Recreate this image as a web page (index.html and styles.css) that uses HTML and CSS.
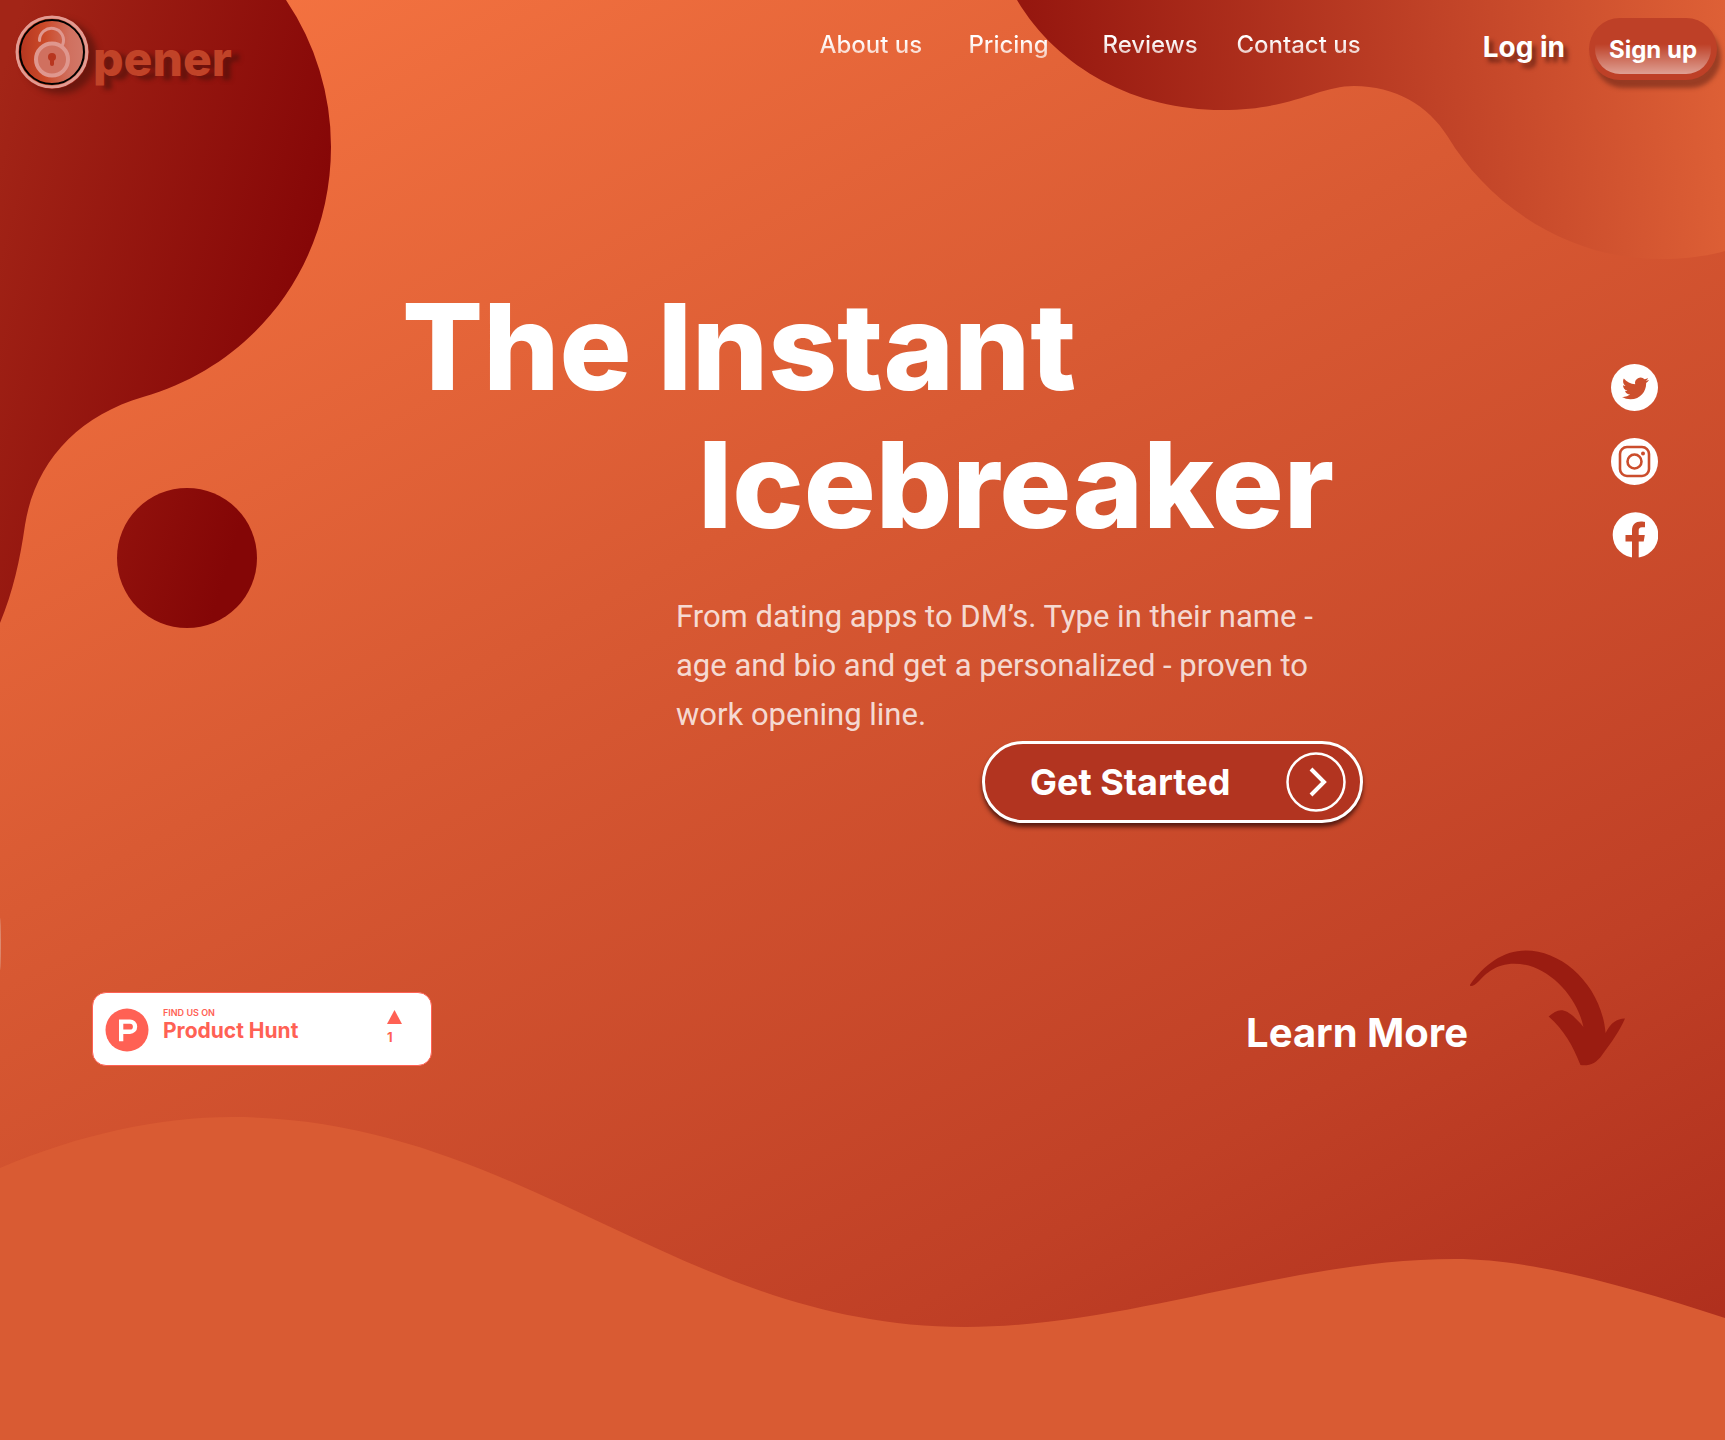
FILE: index.html
```html
<!DOCTYPE html>
<html lang="en">
<head>
<meta charset="utf-8">
<meta name="viewport" content="width=device-width, initial-scale=1">
<title>Opener</title>
<link rel="stylesheet" href="styles.css">
</head>
<body>
<div class="page">
  <svg class="shape shape-left" viewBox="0 0 332 980" width="332" height="980" aria-hidden="true">
    <defs>
      <linearGradient id="left-fill" gradientUnits="userSpaceOnUse" x1="0" y1="80" x2="330" y2="170">
        <stop offset="0" stop-color="#a32517"/><stop offset="1" stop-color="#860707"/>
      </linearGradient>
      <linearGradient id="dot-fill" x1="0" y1="0.3" x2="1" y2="0.6">
        <stop offset="0" stop-color="#91110c"/><stop offset="0.8" stop-color="#840606"/>
      </linearGradient>
    </defs>
    <path fill="url(#left-fill)" d="M0 0H286A262 262 0 0 1 331 147C331 262 258 364 143 397C78 416 35 462 25 525C20 560 13 592 0 623Z"/>
    <circle fill="url(#dot-fill)" cx="187" cy="558" r="70"/>
    <ellipse fill="#dc8a70" cx="0" cy="944" rx="1" ry="26"/>
  </svg>
  <svg class="shape shape-right" viewBox="1017 0 708 260" width="708" height="260" aria-hidden="true">
    <defs>
      <linearGradient id="right-fill" gradientUnits="userSpaceOnUse" x1="1030" y1="60" x2="1725" y2="10">
        <stop offset="0" stop-color="#96170f"/><stop offset="0.58" stop-color="#c04227"/><stop offset="1" stop-color="#de6036"/>
      </linearGradient>
    </defs>
    <path fill="url(#right-fill)" d="M1017 0C1058 69 1136 110 1222 110C1293 110 1318 86 1354 86C1395 86 1428 105 1448 137C1486 200 1562 259 1661 259C1685 259 1708 256 1725 251V0Z"/>
  </svg>
  <svg class="shape shape-wave" viewBox="0 0 1725 324" preserveAspectRatio="none" aria-hidden="true">
    <path fill="#d95b33" d="M0 52C80 18 160 1 232 1C520 1 680 211 965 211C1130 211 1290 143 1455 143C1530 143 1620 168 1725 202V324H0Z"/>
  </svg>

  <header class="header">
    <a class="logo" href="#" aria-label="Opener">
      <svg class="logo-mark" viewBox="0 0 74 74" width="74" height="74" aria-hidden="true">
        <defs>
          <linearGradient id="logo-fill">
            <stop offset="0" stop-color="#b3341f"/><stop offset="0.4" stop-color="#cb4a29"/><stop offset="0.75" stop-color="#d0705f"/><stop offset="1" stop-color="#d27a6b"/>
          </linearGradient>
        </defs>
        <circle cx="37" cy="37" r="35" fill="url(#logo-fill)" stroke="#e39a91" stroke-width="3"/>
        <circle cx="37" cy="37" r="32" fill="none" stroke="#000" stroke-width="2"/>
        <path d="M24.500 25.500A12 12 0 1 1 47.500 30" fill="none" stroke="#df978e" stroke-width="3" stroke-linecap="round"/>
        <circle cx="37" cy="44.500" r="16" fill="#d0705f" stroke="#df978e" stroke-width="4"/>
        <circle cx="37" cy="42" r="4" fill="#b8361f"/>
        <path d="M37 43V49" stroke="#b8361f" stroke-width="4" stroke-linecap="round"/>
      </svg>
      <span class="logo-text">pener</span>
    </a>
    <nav class="nav" aria-label="Main">
      <a href="#">About us</a>
      <a href="#">Pricing</a>
      <a href="#">Reviews</a>
      <a href="#">Contact us</a>
    </nav>
    <a class="login" href="#">Log in</a>
    <button class="signup" type="button"><span>Sign up</span></button>
  </header>

  <main>
    <section class="hero">
      <div class="hero-content">
        <h1 class="title"><span>The Instant</span> <span class="title-second">Icebreaker</span></h1>
        <p class="lead">From dating apps to DM’s. Type in their name -<br>age and bio and get a personalized - proven to<br>work opening line.</p>
        <button class="start" type="button">
          Get Started
          <svg viewBox="0 0 60 60" width="60" height="60" fill="none" stroke="#fff" aria-hidden="true">
            <circle cx="30" cy="30" r="28.500" stroke-width="2.500"/>
            <path d="M25 17L38 30L25 43" stroke-width="4"/>
          </svg>
        </button>
      </div>
      <div class="social">
        <a href="#" aria-label="Twitter">
          <svg viewBox="0 0 47 47" width="47" height="47" aria-hidden="true">
            <circle cx="23.500" cy="23.500" r="23.500" fill="#fff"/>
            <path transform="translate(11 11) scale(1.120)" fill="#cd4f2d" d="M23.953 4.570a10 10 0 01-2.825.775 4.958 4.958 0 002.163-2.723c-.951.555-2.005.959-3.127 1.184a4.920 4.920 0 00-8.384 4.482C7.690 8.095 4.067 6.130 1.640 3.162a4.822 4.822 0 00-.666 2.475c0 1.710.870 3.213 2.188 4.096a4.904 4.904 0 01-2.228-.616v.060a4.923 4.923 0 003.946 4.827 4.996 4.996 0 01-2.212.085 4.936 4.936 0 004.604 3.417 9.867 9.867 0 01-6.102 2.105c-.390 0-.779-.023-1.170-.067a13.995 13.995 0 007.557 2.209c9.053 0 13.998-7.496 13.998-13.985 0-.210 0-.420-.015-.630A9.935 9.935 0 0024 4.590z"/>
          </svg>
        </a>
        <a href="#" aria-label="Instagram">
          <svg viewBox="0 0 47 47" width="47" height="47" aria-hidden="true">
            <circle cx="23.500" cy="23.500" r="23.500" fill="#fff"/>
            <rect x="9" y="9" width="29" height="29" rx="7" fill="none" stroke="#cb4d2c" stroke-width="2.600"/>
            <circle cx="23.500" cy="23.500" r="7" fill="none" stroke="#cb4d2c" stroke-width="2.600"/>
            <circle cx="32" cy="15.500" r="2" fill="#cb4d2c"/>
          </svg>
        </a>
        <a href="#" aria-label="Facebook">
          <svg viewBox="0 0 47 47" width="47" height="47" aria-hidden="true">
            <circle cx="24.500" cy="23" r="22.800" fill="#fff"/>
            <path fill="#ca4b2b" d="M21 47V29.500H14.500V23H21V18.500C21 12.500 24.500 9.500 30 9.500C32 9.500 33 9.700 34 10V15.300H31C28.500 15.300 27.700 16.500 27.700 18.700V23H33.800L32.700 29.500H27.700V47Z"/>
          </svg>
        </a>
      </div>
    </section>

    <section class="links">
      <a class="hunt" href="#">
        <svg viewBox="0 0 44 44" width="44" height="44" aria-hidden="true">
          <circle cx="22" cy="22" r="21.500" fill="#ff6154"/>
          <path fill="#fff" fill-rule="evenodd" d="M14 11.500H25a7.200 7.200 0 0 1 0 14.400H18.300V33.300H14ZM18.300 15.800V21.600H25a2.900 2.900 0 0 0 0-5.800Z"/>
        </svg>
        <span class="hunt-text"><small>FIND US ON</small><strong>Product Hunt</strong></span>
        <span class="hunt-votes">
          <svg viewBox="0 0 15 14" width="15" height="14" aria-hidden="true"><path fill="#ff6154" d="M7.500 0L15 14H0Z"/></svg>
          <span>1</span>
        </span>
      </a>
      <a class="learn" href="#">
        <span>Learn More</span>
        <svg viewBox="723 60 463 345" width="155" height="116" aria-hidden="true">
          <path fill="#9a1c11" d="M723 163C765 105 820 61 890 61C1000 61 1115 165 1128 307C1145 275 1160 266 1186 264C1170 300 1150 330 1118 372C1100 398 1080 406 1053 403C1030 345 1005 300 958 258C990 230 1010 228 1062 289C1040 190 950 100 855 100C800 100 770 130 750 152C738 165 722 172 723 163Z"/>
        </svg>
      </a>
    </section>
  </main>
</div>
</body>
</html>
```
FILE: styles.css
```css
* {
  box-sizing: border-box;
}

body {
  margin: 0;
  font-family: Inter, "Liberation Sans", sans-serif;
  color: #fff;
}

a {
  color: inherit;
  text-decoration: none;
}

button {
  font: inherit;
  color: inherit;
  cursor: pointer;
}

svg {
  display: block;
  flex: none;
}

.page {
  position: relative;
  z-index: 0;
  min-height: 100vh;
  padding-bottom: 373px;
  overflow: hidden;
  background: linear-gradient(152deg, #f87642 0%, #d95a33 39%, #c04026 76%, #ab2b1b 100%);
}

/* Decorative shapes behind the content */
.shape {
  position: absolute;
  z-index: -1;
}

.shape-left {
  top: 0;
  left: 0;
}

.shape-right {
  top: 0;
  right: 0;
}

.shape-wave {
  bottom: 0;
  left: 0;
  width: 100%;
  height: 324px;
}

/* Header */
.header {
  display: flex;
  align-items: flex-start;
  height: 100px;
  padding: 15px 8px 0 15px;
}

.logo {
  display: flex;
  gap: 4px;
  margin-right: auto;
}

.logo-mark {
  border-radius: 50%;
  box-shadow: 8px 5px 6px rgba(60, 15, 10, 0.5);
}

.logo-text {
  padding-top: 15px;
  font-size: 48px;
  line-height: 58px;
  font-weight: 800;
  color: #c14328;
  text-shadow: 8px 4px 4px rgba(60, 15, 10, 0.5);
}

.nav {
  display: grid;
  grid-template-columns: 149px 134px 134px auto;
  margin-right: 122px;
  padding-top: 15px;
  font-size: 24px;
  line-height: 30px;
  font-weight: 500;
}

.nav a {
  justify-self: start;
  color: transparent;
  background: linear-gradient(#fff 35%, rgba(255, 255, 255, 0.65) 95%);
  -webkit-background-clip: text;
  background-clip: text;
}

.login {
  margin-right: 24px;
  padding-top: 15px;
  font-size: 28px;
  line-height: 34px;
  font-weight: 700;
  text-shadow: 4px 5px 4px rgba(60, 15, 10, 0.6);
}

.signup {
  position: relative;
  width: 128px;
  height: 62px;
  margin-top: 3px;
  padding: 0;
  border: 0;
  border-radius: 31px;
  background: #be4027;
  box-shadow: 4px 8px 4px rgba(90, 30, 20, 0.5);
  font-size: 24px;
  font-weight: 700;
}

.signup::before {
  content: "";
  position: absolute;
  inset: 6px;
  border-radius: 25px;
  background: linear-gradient(rgba(255, 255, 255, 0) 40%, rgba(255, 255, 255, 0.5));
}

.signup span {
  position: relative;
}

/* Hero */
.hero {
  display: grid;
  grid-template-columns: 402fr 961fr 362fr;
  padding-top: 178px;
}

.hero-content {
  grid-column: 2;
  display: flex;
  flex-direction: column;
}

.title {
  display: flex;
  flex-direction: column;
  margin: 0 0 38px;
  font-size: 120px;
  line-height: 138px;
  font-weight: 800;
  white-space: nowrap;
}

.title-second {
  margin-left: 296px;
}

.lead {
  margin: 0 0 2px 274px;
  font-family: Roboto, Inter, sans-serif;
  font-size: 31px;
  line-height: 49px;
  color: rgba(255, 255, 255, 0.8);
  white-space: nowrap;
}

.start {
  display: flex;
  align-items: center;
  justify-content: space-between;
  align-self: flex-end;
  width: 381px;
  height: 82px;
  padding: 0 14px 0 45px;
  border: 3px solid #fff;
  border-radius: 41px;
  background: #b23420;
  box-shadow: 0 4px 4px rgba(60, 15, 10, 0.8);
  font-size: 36px;
  font-weight: 700;
}

.social {
  display: flex;
  flex-direction: column;
  gap: 27px;
  justify-self: end;
  padding: 86px 67px 0 0;
}

/* Bottom links */
.links {
  display: flex;
  align-items: flex-end;
  justify-content: space-between;
  margin-top: 127px;
  padding: 0 100px 0 92px;
}

.hunt {
  display: flex;
  align-items: flex-start;
  width: 340px;
  height: 74px;
  padding: 15px 29px 0 12px;
  border: 1px solid #ff6154;
  border-radius: 14px;
  background: #fff;
  color: #ff6154;
}

.hunt-text {
  display: flex;
  flex-direction: column;
  margin-left: 14px;
}

.hunt-text small {
  font-size: 9px;
  line-height: 10px;
  font-weight: 600;
}

.hunt-text strong {
  font-size: 21px;
  line-height: 26px;
  font-weight: 700;
}

.hunt-votes {
  display: flex;
  flex-direction: column;
  gap: 5px;
  margin-left: auto;
  padding-top: 2px;
  font-size: 13px;
  line-height: 16px;
  font-weight: 700;
}

.learn {
  display: flex;
  align-items: flex-end;
  gap: 2px;
  font-size: 40px;
  line-height: 48px;
  font-weight: 700;
}

.learn span {
  padding-bottom: 9px;
}
```
